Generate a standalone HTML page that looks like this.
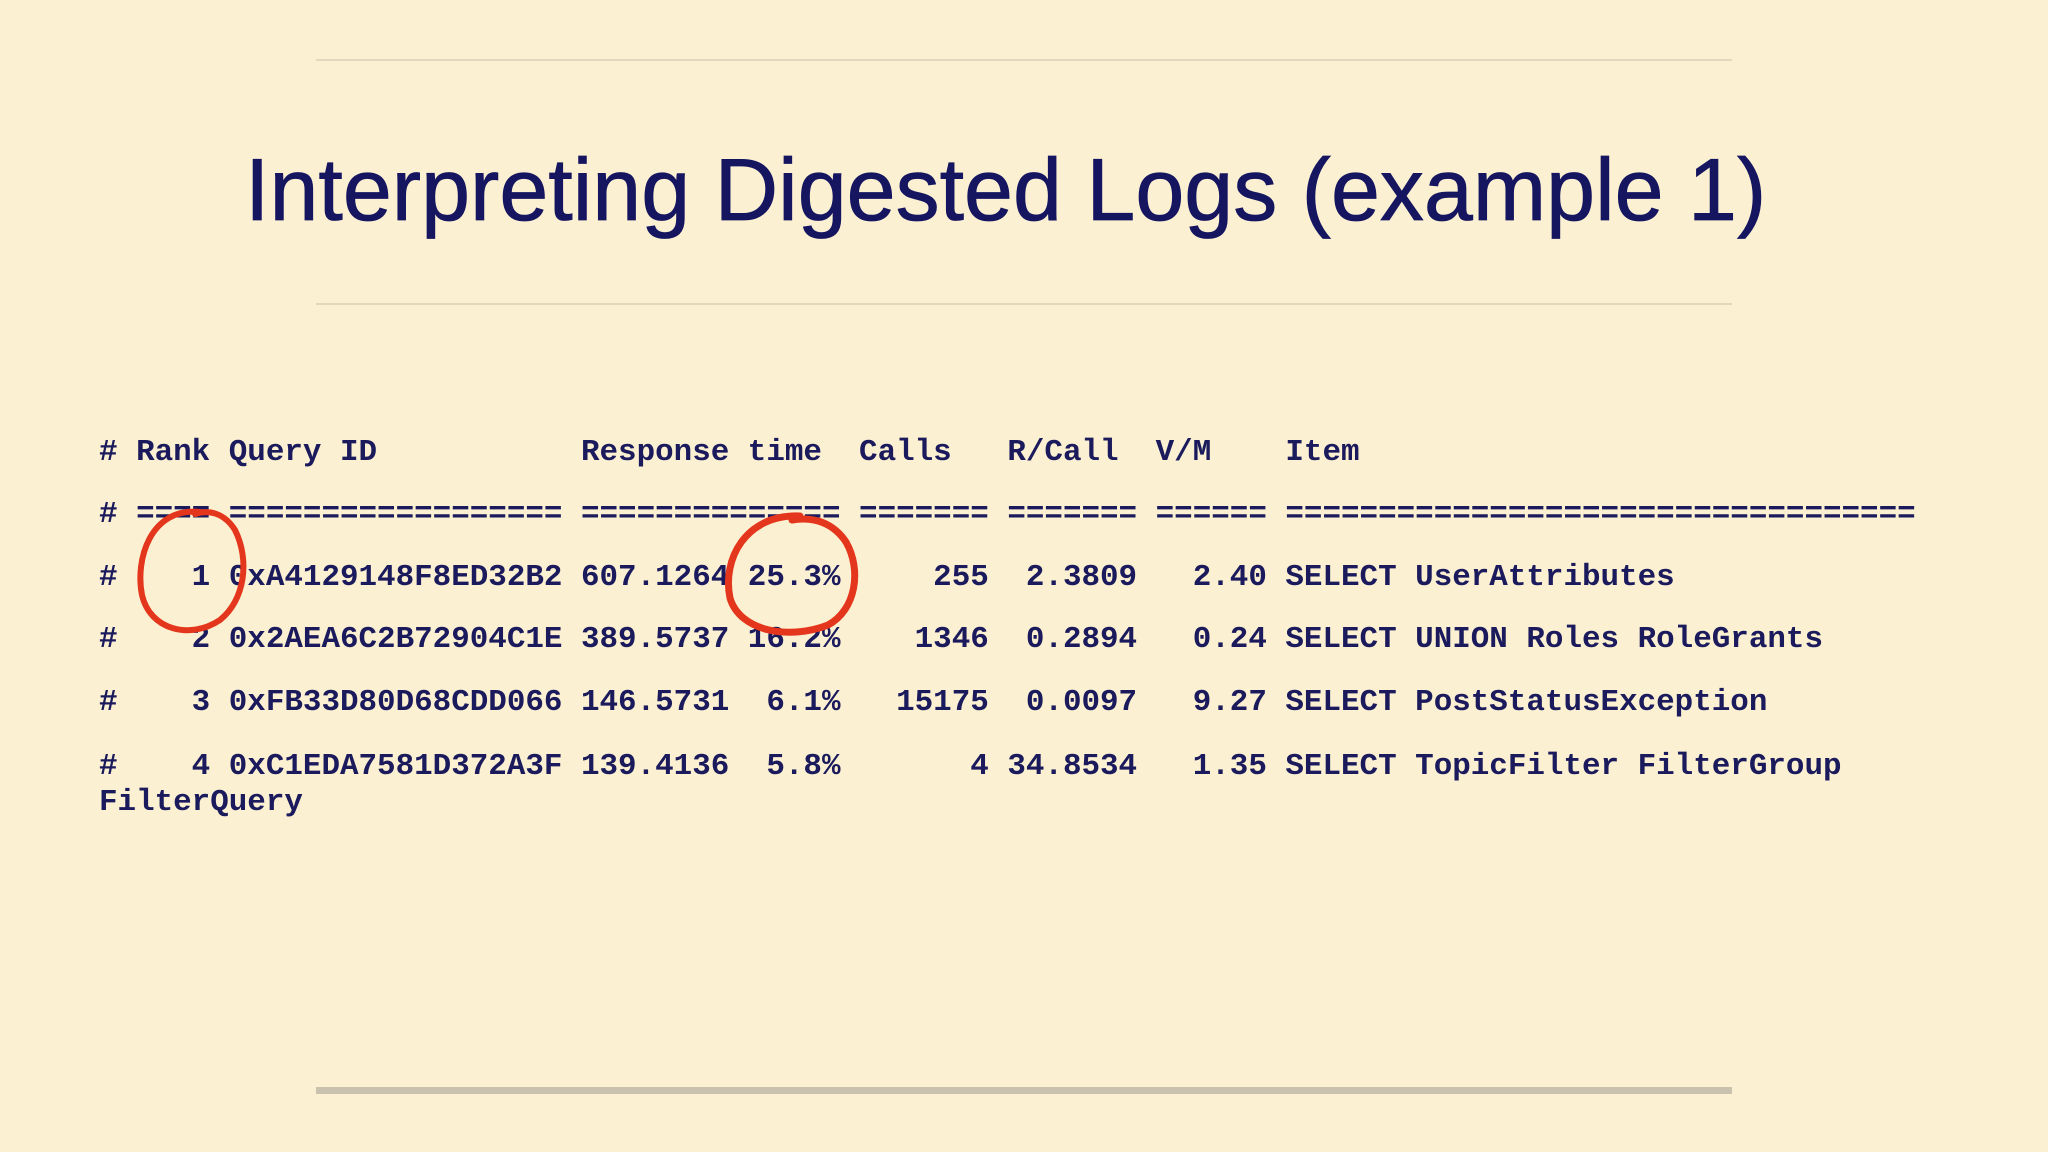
<!DOCTYPE html>
<html><head><meta charset="utf-8"><style>
html,body{margin:0;padding:0}
body{width:2048px;height:1152px;background:#fbf1d2;position:relative;overflow:hidden}
.hl{position:absolute;left:316px;width:1416px;height:2px;background:#e2d8bd}
.title{position:absolute;left:245px;top:130px;font-family:"Liberation Sans",sans-serif;font-size:88px;color:#151560;white-space:nowrap;transform-origin:0 0;transform:scaleX(1.0);line-height:120px;-webkit-text-stroke:0.8px #151560}
.m{position:absolute;left:99px;font-family:"Liberation Mono",monospace;font-weight:bold;font-size:30.9px;color:#1a1a5c;white-space:pre;line-height:36px}
</style></head><body>
<div class="hl" style="top:59px"></div>
<div class="hl" style="top:303px"></div>
<div style="position:absolute;left:316px;width:1416px;top:1087px;height:7px;background:#c9c2ae"></div>
<div class="title">Interpreting Digested Logs (example 1)</div>
<div class="m" style="top:435px"># Rank Query ID           Response time  Calls   R/Call  V/M    Item</div>
<div class="m" style="top:497px"># ==== ================== ============== ======= ======= ====== ==================================</div>
<div class="m" style="top:560px">#    1 0xA4129148F8ED32B2 607.1264 25.3%     255  2.3809   2.40 SELECT UserAttributes</div>
<div class="m" style="top:622px">#    2 0x2AEA6C2B72904C1E 389.5737 16.2%    1346  0.2894   0.24 SELECT UNION Roles RoleGrants</div>
<div class="m" style="top:685px">#    3 0xFB33D80D68CDD066 146.5731  6.1%   15175  0.0097   9.27 SELECT PostStatusException</div>
<div class="m" style="top:749px">#    4 0xC1EDA7581D372A3F 139.4136  5.8%       4 34.8534   1.35 SELECT TopicFilter FilterGroup
FilterQuery</div>
<svg style="position:absolute;left:0;top:0" width="2048" height="1152">
<g fill="none" stroke="#e4361c" stroke-linecap="round">
<path d="M200 512 C150 507 135 560 142 595 C150 630 190 640 220 620 C245 600 250 560 235 530 C225 514 210 509 195 514" stroke-width="6"/>
<path d="M800 516 C745 514 722 560 730 598 C740 632 790 640 828 625 C856 610 862 570 846 542 C834 524 815 516 792 520" stroke-width="7"/>
</g>
</svg>
</body></html>
